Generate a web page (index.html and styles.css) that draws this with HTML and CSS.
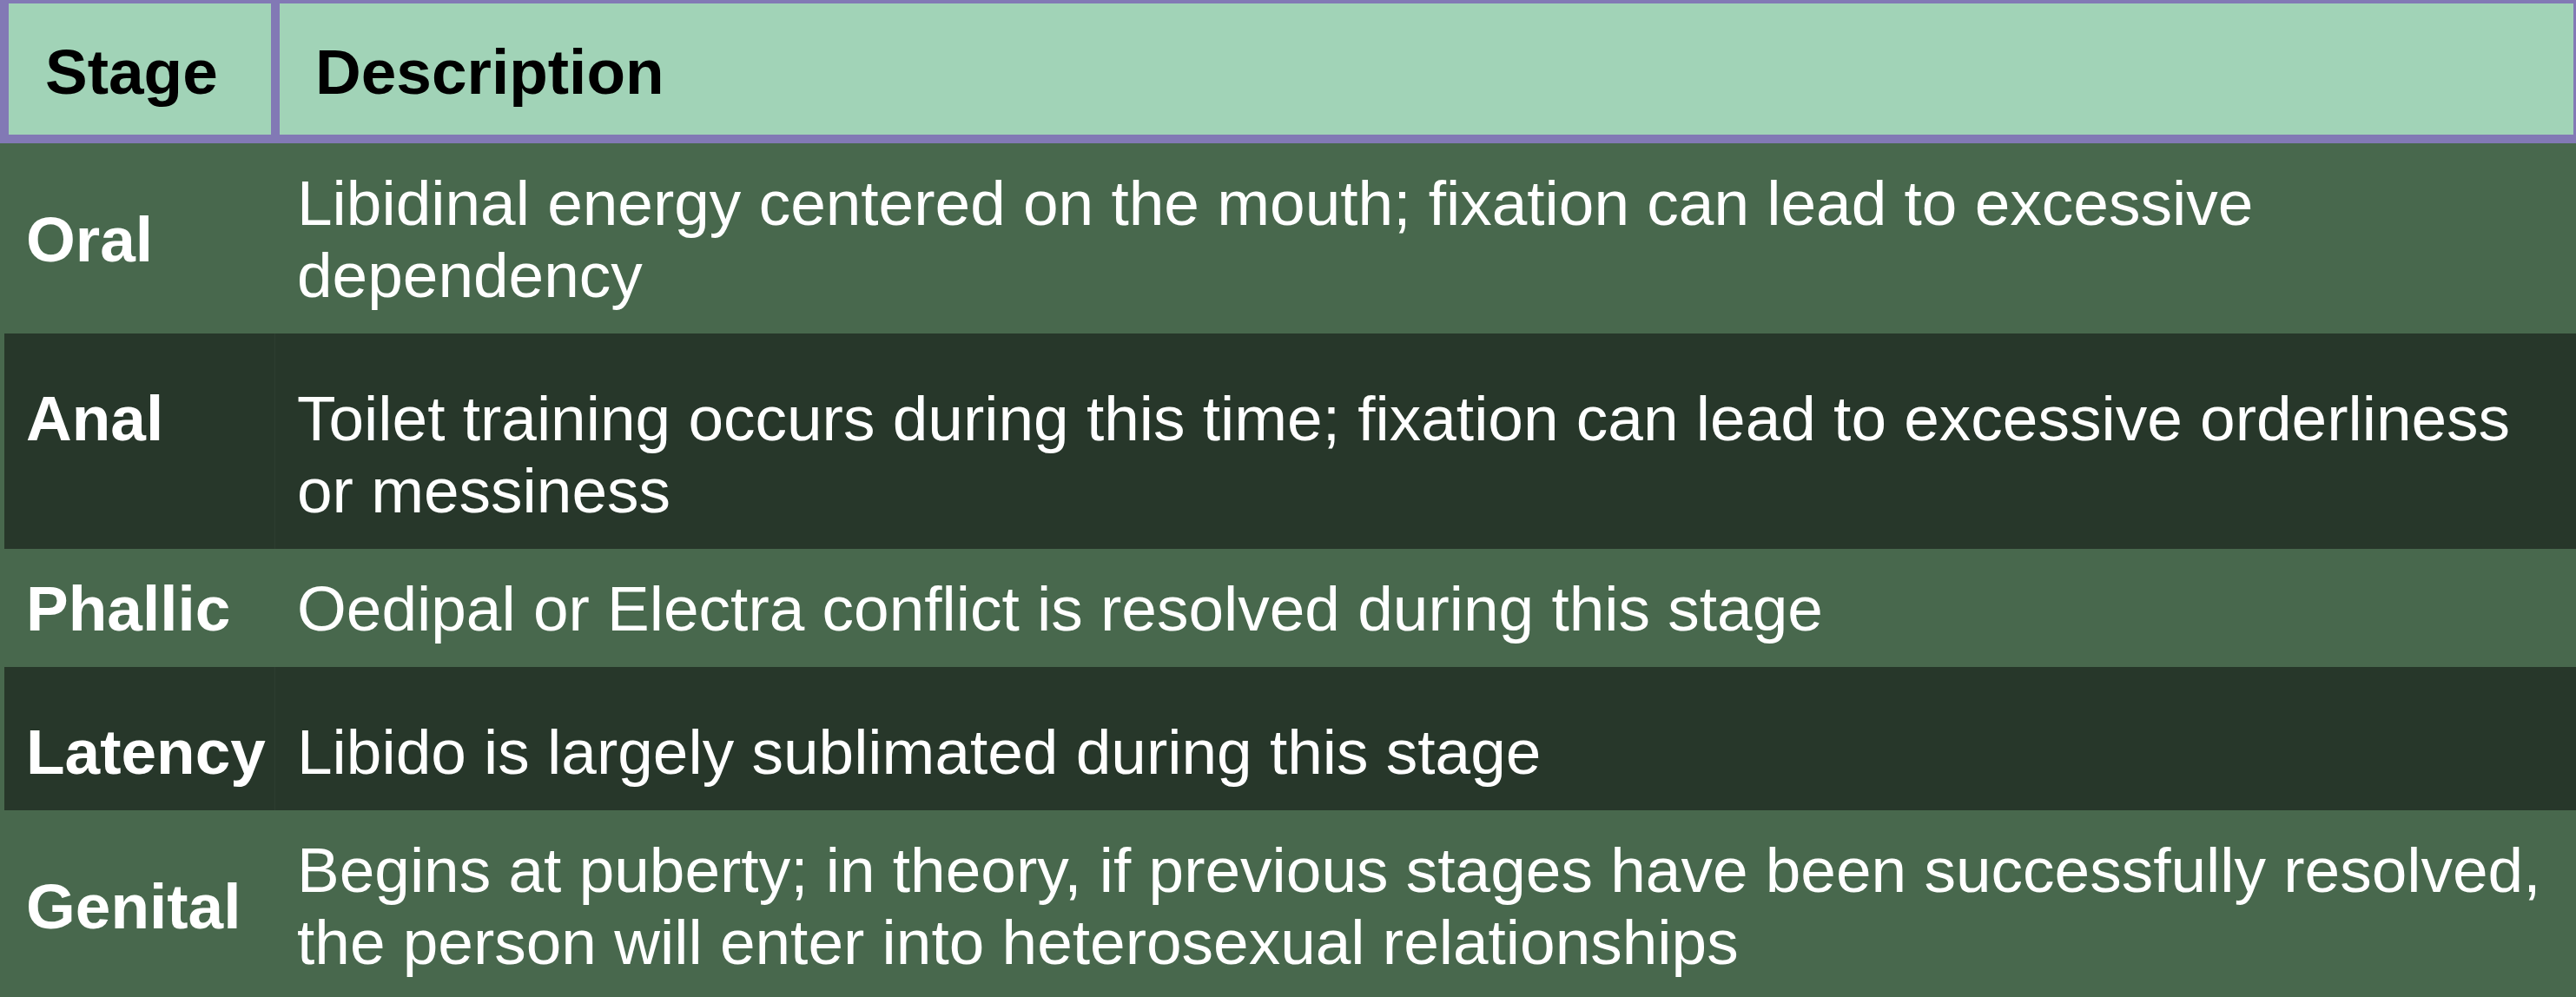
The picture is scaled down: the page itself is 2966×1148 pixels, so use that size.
FILE: index.html
```html
<!DOCTYPE html>
<html lang="en">
<head>
<meta charset="utf-8">
<title>Psychosexual stages</title>
<link rel="stylesheet" href="styles.css">
</head>
<body>
<table class="stages">
  <colgroup>
    <col class="c-stage">
    <col class="c-desc">
  </colgroup>
  <thead>
    <tr>
      <th class="h-stage">Stage</th>
      <th class="h-desc">Description</th>
    </tr>
  </thead>
  <tbody>
    <tr class="light">
      <td class="stage">Oral</td>
      <td class="desc">Libidinal energy centered on the mouth; fixation can lead to excessive dependency</td>
    </tr>
    <tr class="dark">
      <td class="stage">Anal</td>
      <td class="desc">Toilet training occurs during this time; fixation can lead to excessive orderliness or messiness</td>
    </tr>
    <tr class="light">
      <td class="stage">Phallic</td>
      <td class="desc">Oedipal or Electra conflict is resolved during this stage</td>
    </tr>
    <tr class="dark">
      <td class="stage">Latency</td>
      <td class="desc">Libido is largely sublimated during this stage</td>
    </tr>
    <tr class="light">
      <td class="stage">Genital</td>
      <td class="desc">Begins at puberty; in theory, if previous stages have been successfully resolved, the person will enter into heterosexual relationships</td>
    </tr>
  </tbody>
</table>
</body>
</html>
```
FILE: styles.css
```css
html, body {
  margin: 0;
  padding: 0;
  background: #48684d;
}

body {
  font-family: "Liberation Sans", Arial, sans-serif;
  overflow: hidden;
}

.stages {
  width: 2966px;
  border-collapse: separate;
  border-spacing: 0;
  table-layout: fixed;
}

.c-stage {
  width: 317px;
}

.stages th {
  background: #a1d3b7;
  color: #000;
  font-weight: bold;
  font-size: 73px;
  line-height: 83px;
  text-align: left;
  vertical-align: middle;
  border-style: solid;
  border-color: #8279b5;
  padding: 37px 0 31px 0;
}

.h-stage {
  border-width: 4px 5px 10px 10px;
  padding-left: 42px !important;
}

.h-desc {
  border-width: 4px 3px 10px 5px;
  padding-left: 41px !important;
}

.stages td {
  color: #fff;
  font-size: 73px;
  line-height: 83px;
  text-align: left;
  vertical-align: middle;
  padding: 27px 20px 26px 20px;
}

.light td {
  background: #48684d;
}

.dark td {
  background: #27372a;
  padding-top: 56px;
}

.stage {
  font-weight: bold;
  border-left: 5px solid #48684d;
  padding-left: 25px !important;
}

.dark .stage {
  vertical-align: top;
  border-right: 1px solid #2d3e30;
}

.desc {
  padding-left: 25px !important;
}
```
